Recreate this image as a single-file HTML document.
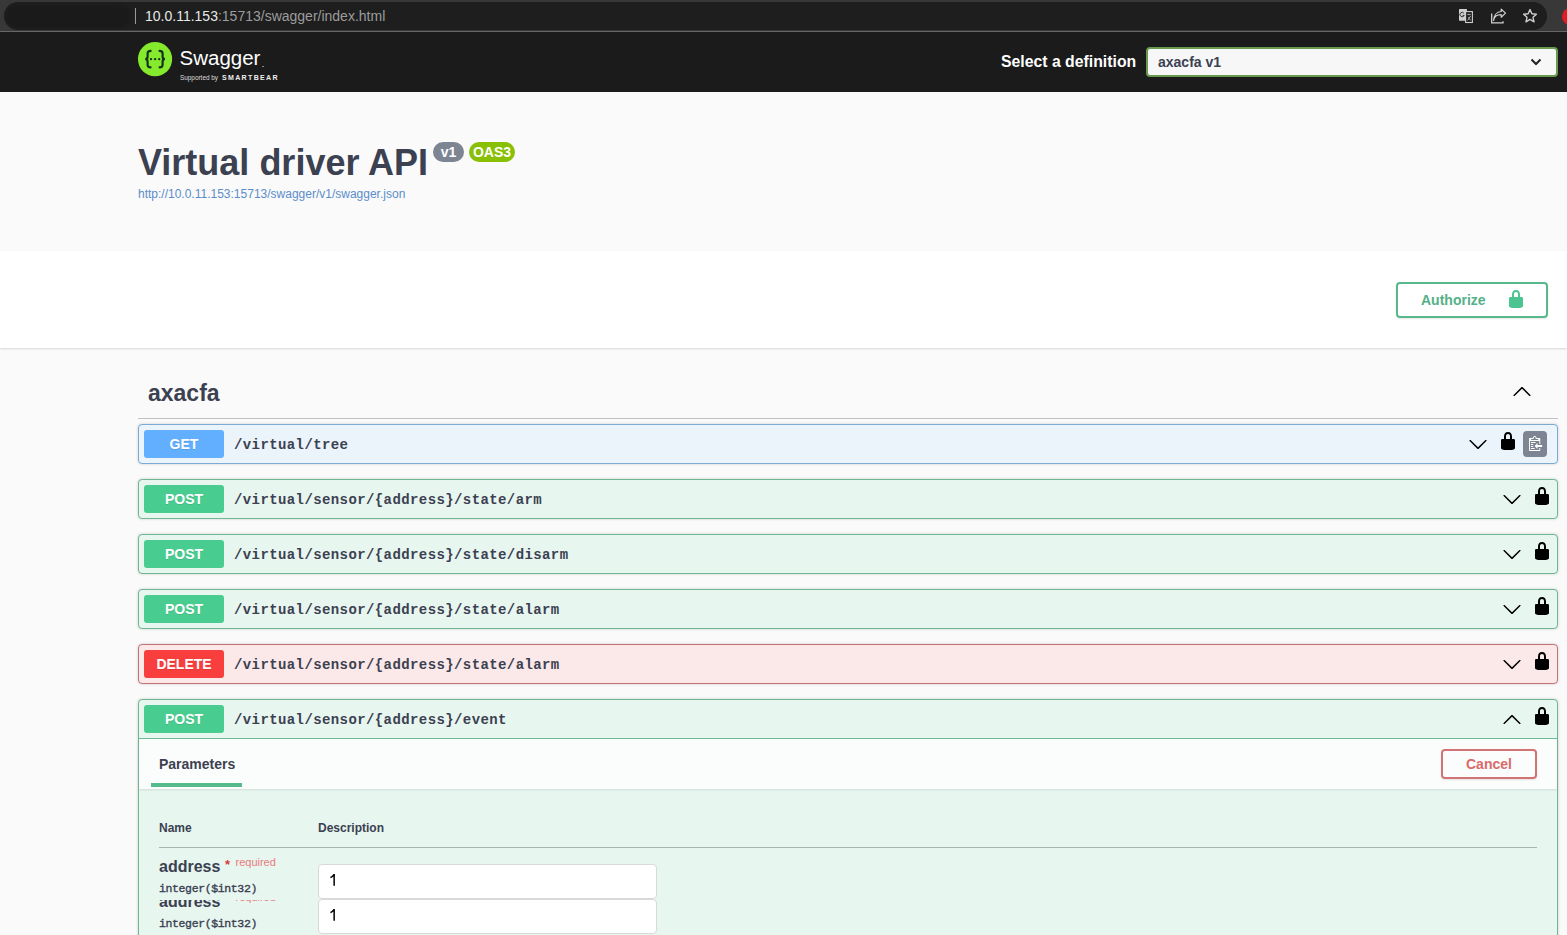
<!DOCTYPE html>
<html><head><meta charset="utf-8">
<style>
*{margin:0;padding:0;box-sizing:border-box}
html,body{width:1567px;height:935px;overflow:hidden;background:#fafafa;font-family:"Liberation Sans",sans-serif;color:#3b4151;position:relative}
.a{position:absolute;white-space:nowrap;line-height:1}
.mono{font-family:"Liberation Mono",monospace}
#chrome{position:absolute;left:0;top:0;width:1567px;height:31px;background:#383838}
#omni{position:absolute;left:4px;top:2px;width:1543px;height:28px;border-radius:14px;background:#1e1e1e}
#cline{position:absolute;left:0;top:31px;width:1567px;height:1px;background:#676767}
#topbar{position:absolute;left:0;top:32px;width:1567px;height:60px;background:#1b1b1b}
#info{position:absolute;left:0;top:92px;width:1567px;height:159px;background:#fafafa}
#scheme{position:absolute;left:0;top:251px;width:1567px;height:97px;background:#fff;box-shadow:0 1px 2px 0 rgba(0,0,0,.15)}
.badge{position:absolute;height:20px;border-radius:10px;color:#fff;font-weight:700;font-size:14px;line-height:20px;text-align:center}
.opb{position:absolute;left:138px;width:1420px;height:40px;border-radius:4px;border:1px solid;box-shadow:0 0 3px rgba(0,0,0,.19)}
.get{background:#ebf3fb;border-color:#7eabd6}
.post{background:#e8f6f0;border-color:#6db892}
.del{background:#fbe8e8;border-color:#c47474}
.meth{position:absolute;left:5px;top:5px;width:80px;height:28px;border-radius:3px;color:#fff;font-weight:700;font-size:14px;line-height:28px;text-align:center;text-shadow:0 1px 0 rgba(0,0,0,.1)}
.get .meth{background:#61affe}
.post .meth{background:#49cc90}
.del .meth{background:#f93e3e}
.path{position:absolute;left:95px;top:12px;font-family:"Liberation Mono",monospace;font-weight:700;font-size:14px;letter-spacing:0.4px;line-height:16px;color:#3b4151;white-space:nowrap}
.chev{position:absolute;width:20px;height:20px}
.lock{position:absolute;width:20px;height:20px}

</style></head><body>
<svg width="0" height="0" style="position:absolute">
<defs>
<symbol viewBox="0 0 20 20" id="locked"><path d="M15.8 8H14V5.6C14 2.703 12.665 1 10 1 7.334 1 6 2.703 6 5.6V8H4c-.553 0-1 .646-1 1.199V17c0 .549.428 1.139.951 1.307l1.197.387C5.672 18.861 6.55 19 7.1 19h5.8c.549 0 1.428-.139 1.951-.307l1.196-.387c.524-.167.953-.757.953-1.306V9.199C17 8.646 16.352 8 15.8 8zM12 8H8V5.199C8 3.754 8.797 3 10 3c1.203 0 2 .754 2 2.199V8z"/></symbol>
<symbol viewBox="0 0 20 20" id="arrow-down"><path d="M17.418 6.109c.272-.268.709-.268.979 0s.271.701 0 .969l-7.908 7.83c-.27.268-.707.268-.979 0l-7.908-7.83c-.27-.268-.27-.701 0-.969.271-.268.709-.268.979 0L10 13.25l7.418-7.141z"/></symbol>
<symbol viewBox="0 0 16 16" id="copy"><path fill-rule="evenodd" d="M2 13h4v1H2v-1zm5-6H2v1h5V7zm2 3V8l-3 3 3 3v-2h5v-2H9zM4.5 9H2v1h2.5V9zM2 12h2.5v-1H2v1zm9 1h1v2c-.02.28-.11.52-.3.7-.19.18-.42.28-.7.3H1c-.55 0-1-.45-1-1V4c0-.55.45-1 1-1h3c0-1.11.89-2 2-2 1.11 0 2 .89 2 2h3c.55 0 1 .45 1 1v5h-1V6H1v9h10v-2zM2 5h8c0-.55-.45-1-1-1H8c-.55 0-1-.45-1-1s-.45-1-1-1-1 .45-1 1-.45 1-1 1H3c-.55 0-1 .45-1 1z"/></symbol>
</defs></svg>

<div id="chrome">
  <div id="omni"></div>
  <div class="a" style="left:6px;top:6px;width:124px;height:21px;border-radius:10px;background:#1a1a1a;filter:blur(1.5px)"></div>
  <div class="a" style="left:135px;top:8px;width:1px;height:16px;background:#9a9a9a"></div>
  <div class="a" style="left:145px;top:9px;font-size:14px;color:#e8e8e8">10.0.11.153<span style="color:#9c9c9c">:15713/swagger/index.html</span></div>
  <svg class="a" style="left:1456px;top:6px" width="20" height="20" viewBox="0 0 20 20">
    <rect x="3" y="3" width="8" height="11.7" rx="0.6" fill="#cfcfcf"/>
    <path d="M7.9 7.2a2.2 2.2 0 1 0 0.3 2.2H6.6" fill="none" stroke="#333" stroke-width="1"/>
    <rect x="9.6" y="5.6" width="6.8" height="10.9" fill="#1e1e1e" stroke="#cfcfcf" stroke-width="1.1"/>
    <path d="M11.3 8.6h3.4M12.9 7.8v0.8M11.6 14.4l3-4.4M12.2 11.2l2.5 3.2" stroke="#bdbdbd" stroke-width="0.9" fill="none"/>
  </svg>
  <svg class="a" style="left:1489px;top:6px" width="20" height="20" viewBox="0 0 20 20">
    <path d="M2.7 7.5v9.3h11.3v-1.5" fill="none" stroke="#cfcfcf" stroke-width="1.3"/>
    <path d="M4.6 14.4c0.4-3.6 3-5.8 7.6-5.8v2.6l4.3-4.1-4.3-4v2.4C7.6 5.8 4.8 9.6 4.6 14.4z" fill="none" stroke="#cfcfcf" stroke-width="1.2" stroke-linejoin="round"/>
  </svg>
  <svg class="a" style="left:1520px;top:6px" width="20" height="20" viewBox="0 0 20 20">
    <path d="M10 3.6l1.9 4.2 4.5.45-3.4 3.05 1 4.5-4-2.35-4 2.35 1-4.5-3.4-3.05 4.5-.45z" fill="none" stroke="#cfcfcf" stroke-width="1.4" stroke-linejoin="round"/>
  </svg>
  <div class="a" style="left:1562px;top:8px;width:17px;height:17px;border-radius:9px;background:#e11b22"></div>
</div>
<div id="cline"></div>

<div id="topbar">
  <svg class="a" style="left:136px;top:8px" width="40" height="40" viewBox="0 0 40 40">
    <circle cx="19.05" cy="19.1" r="17.1" fill="#85ea2d"/>
    <g fill="none" stroke="#15341f" stroke-width="2.2" stroke-linecap="round">
      <path d="M14.6 10.9c-2 0-3 .8-3 2.6v3.3c0 1.5-.8 2.2-2.3 2.3 1.5.1 2.3.8 2.3 2.3v3.3c0 1.8 1 2.6 3 2.6"/>
      <path d="M23.6 10.9c2 0 3 .8 3 2.6v3.3c0 1.5.8 2.2 2.3 2.3-1.5.1-2.3.8-2.3 2.3v3.3c0 1.8-1 2.6-3 2.6"/>
    </g>
    <g fill="#15341f"><circle cx="15" cy="19.1" r="1.2"/><circle cx="19.1" cy="19.1" r="1.2"/><circle cx="23.2" cy="19.1" r="1.2"/></g>
  </svg>
  <div class="a" style="left:179.5px;top:16px;font-size:20.5px;color:#fff">Swagger</div><div class="a" style="left:262px;top:34px;width:2px;height:1px;background:#888"></div>
  <div class="a" style="left:180px;top:42.5px;font-size:6.4px;color:#ddd">Supported by</div>
  <div class="a" style="left:222px;top:42px;font-size:7px;font-weight:700;letter-spacing:1.35px;color:#eee">SMARTBEAR</div>
  <div class="a" style="left:1001px;top:22px;font-size:15.8px;font-weight:700;color:#fff">Select a definition</div>
  <div class="a" style="left:1146px;top:15px;width:412px;height:30px;border:2px solid #68994f;border-radius:4px;background:#f7f7f7"></div>
  <div class="a" style="left:1158px;top:23px;font-size:14px;font-weight:700;color:#3b4151">axacfa v1</div>
  <svg class="a" style="left:1529px;top:25px" width="14" height="10" viewBox="0 0 14 10"><path d="M2.5 2.5l4.5 4.5 4.5-4.5" fill="none" stroke="#222" stroke-width="2"/></svg>
</div>

<div id="info">
  <div class="a" style="left:138px;top:53px;font-size:36px;font-weight:700;color:#3b4151">Virtual driver API</div>
  <div class="badge" style="left:433px;top:50px;width:31px;background:#7d8492">v1</div>
  <div class="badge" style="left:469px;top:50px;width:46px;background:#89bf04">OAS3</div>
  <div class="a" style="left:138px;top:96px;font-size:12px;color:#5a8dca">http://10.0.11.153:15713/swagger/v1/swagger.json</div>
</div>

<div id="scheme">
  <div class="a" style="left:1396px;top:31px;width:152px;height:36px;border:2px solid #58b88c;border-radius:4px;box-shadow:0 1px 2px rgba(0,0,0,.1)"></div>
  <div class="a" style="left:1421px;top:42px;font-size:14px;font-weight:700;color:#55b087">Authorize</div>
  <svg class="lock" style="left:1506px;top:38px;fill:#4cc48f"><use href="#locked"/></svg>
</div>

<div class="a" style="left:148px;top:381.5px;font-size:23px;font-weight:700;color:#3b4151">axacfa</div>
<svg class="chev" style="left:1512px;top:382px;transform:rotate(180deg)"><use href="#arrow-down"/></svg>
<div class="a" style="left:138px;top:418px;width:1420px;height:1px;background:rgba(59,65,81,.3)"></div>

<div class="opb get" style="top:424px"><div class="meth">GET</div><div class="path">/virtual/tree</div><svg class="chev" style="left:1329px;top:9px"><use href="#arrow-down"/></svg><svg class="lock" style="left:1359px;top:6px"><use href="#locked"/></svg><div class="a" style="left:1384px;top:6px;width:24px;height:26px;border-radius:4px;background:#7d8492"><svg style="position:absolute;left:6px;top:4px" width="15" height="16" viewBox="0 0 16 16" preserveAspectRatio="none" fill="#fff"><use href="#copy"/></svg></div></div>
<div class="opb post" style="top:479px"><div class="meth">POST</div><div class="path">/virtual/sensor/{address}/state/arm</div><svg class="chev" style="left:1362.5px;top:9px"><use href="#arrow-down"/></svg><svg class="lock" style="left:1393px;top:6px"><use href="#locked"/></svg></div>
<div class="opb post" style="top:534px"><div class="meth">POST</div><div class="path">/virtual/sensor/{address}/state/disarm</div><svg class="chev" style="left:1362.5px;top:9px"><use href="#arrow-down"/></svg><svg class="lock" style="left:1393px;top:6px"><use href="#locked"/></svg></div>
<div class="opb post" style="top:589px"><div class="meth">POST</div><div class="path">/virtual/sensor/{address}/state/alarm</div><svg class="chev" style="left:1362.5px;top:9px"><use href="#arrow-down"/></svg><svg class="lock" style="left:1393px;top:6px"><use href="#locked"/></svg></div>
<div class="opb del" style="top:644px"><div class="meth">DELETE</div><div class="path">/virtual/sensor/{address}/state/alarm</div><svg class="chev" style="left:1362.5px;top:9px"><use href="#arrow-down"/></svg><svg class="lock" style="left:1393px;top:6px"><use href="#locked"/></svg></div>
<div class="opb post" style="top:699px;height:300px"><div class="meth">POST</div><div class="path">/virtual/sensor/{address}/event</div><svg class="chev" style="left:1362.5px;top:10px;transform:rotate(180deg)"><use href="#arrow-down"/></svg><svg class="lock" style="left:1393px;top:6px"><use href="#locked"/></svg><div class="a" style="left:0;top:38px;width:1418px;height:1px;background:#6cbb95"></div>
<div class="a" style="left:0;top:39px;width:1418px;height:50px;background:rgba(255,255,255,.8);box-shadow:0 1px 2px rgba(0,0,0,.1)">
  <div class="a" style="left:20px;top:18px;font-size:14px;font-weight:700;color:#3b4151">Parameters</div>
  <div class="a" style="left:12px;top:44px;width:91px;height:4px;background:#55bb8c"></div>
  <div class="a" style="left:1302px;top:10px;width:96px;height:30px;border:2px solid #d27474;border-radius:4px;box-shadow:0 1px 2px rgba(0,0,0,.1)"></div>
  <div class="a" style="left:1327px;top:18px;font-size:14px;font-weight:700;color:#d96a6a">Cancel</div>
</div>
<div class="a" style="left:20px;top:122px;font-size:12px;font-weight:700;color:#3b4151">Name</div>
<div class="a" style="left:179px;top:122px;font-size:12px;font-weight:700;color:#3b4151">Description</div>
<div class="a" style="left:20px;top:147px;width:1378px;height:1px;background:#a4b7ae"></div>
<div class="a" style="left:0;top:0;width:1418px;height:200px;overflow:hidden">
<div class="a" style="left:20px;top:158.8px;font-size:16px;font-weight:700;color:#3b4151">address</div><div class="a" style="left:86px;top:157.5px;font-size:13px;font-weight:700;color:#d63c3c">*</div><div class="a" style="left:96.5px;top:156.5px;font-size:11px;color:#e97a7a">required</div>
<div class="a mono" style="left:20px;top:183.0px;font-size:11.5px;font-weight:400;letter-spacing:-0.37px;-webkit-text-stroke:0.35px #3b4151;color:#3b4151">integer($int32)</div>
</div>
<div class="a" style="left:0;top:0;width:1418px;height:199px;overflow:hidden">
<div class="a" style="left:178.5px;top:163.5px;width:339px;height:35px;border:1px solid #d9d9d9;border-radius:4px;background:#fff"></div>
<svg class="a" style="left:190px;top:173px" width="10" height="14" viewBox="0 0 10 14"><path d="M4.4 1h1.5v11.8H4.4V3.5C3.7 4.2 2.5 4.9 1.4 5.3V3.8C2.8 3.1 3.9 2.1 4.4 1z" fill="#000"/></svg>
</div>
<div class="a" style="left:0;top:200px;width:1418px;height:40px;overflow:hidden">
<div class="a" style="left:20px;top:-6.2px;font-size:16px;font-weight:700;color:#3b4151">address</div><div class="a" style="left:86px;top:-7.5px;font-size:13px;font-weight:700;color:#d63c3c">*</div><div class="a" style="left:96.5px;top:-8.5px;font-size:11px;color:#e97a7a">required</div>
<div class="a mono" style="left:20px;top:18.0px;font-size:11.5px;font-weight:400;letter-spacing:-0.37px;-webkit-text-stroke:0.35px #3b4151;color:#3b4151">integer($int32)</div>
</div>
<div class="a" style="left:0;top:199px;width:1418px;height:40px;overflow:hidden">
<div class="a" style="left:178.5px;top:0px;width:339px;height:35px;border:1px solid #d9d9d9;border-radius:4px;background:#fff"></div>
<svg class="a" style="left:190px;top:9px" width="10" height="14" viewBox="0 0 10 14"><path d="M4.4 1h1.5v11.8H4.4V3.5C3.7 4.2 2.5 4.9 1.4 5.3V3.8C2.8 3.1 3.9 2.1 4.4 1z" fill="#000"/></svg>
</div></div></div>

</body></html>
